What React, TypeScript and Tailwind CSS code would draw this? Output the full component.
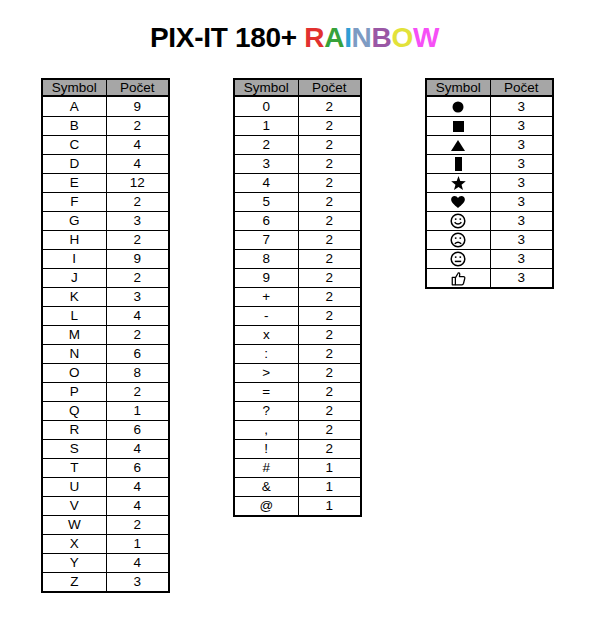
import React from "react";

type Row = [React.ReactNode, number];

const letters: Row[] = [
  ["A", 9], ["B", 2], ["C", 4], ["D", 4], ["E", 12], ["F", 2], ["G", 3],
  ["H", 2], ["I", 9], ["J", 2], ["K", 3], ["L", 4], ["M", 2], ["N", 6],
  ["O", 8], ["P", 2], ["Q", 1], ["R", 6], ["S", 4], ["T", 6], ["U", 4],
  ["V", 4], ["W", 2], ["X", 1], ["Y", 4], ["Z", 3],
];

const digits: Row[] = [
  ["0", 2], ["1", 2], ["2", 2], ["3", 2], ["4", 2], ["5", 2], ["6", 2],
  ["7", 2], ["8", 2], ["9", 2], ["+", 2], ["-", 2], ["x", 2], [":", 2],
  [">", 2], ["=", 2], ["?", 2], [",", 2], ["!", 2], ["#", 1], ["&", 1],
  ["@", 1],
];

const Face = ({ mouth }: { mouth: "smile" | "frown" | "flat" }) => (
  <svg width="16" height="16" viewBox="0 0 16 16" fill="none" stroke="black" strokeWidth="1.5">
    <circle cx="8" cy="8" r="6.8" />
    <circle cx="5.7" cy="6.1" r="0.95" fill="black" stroke="none" />
    <circle cx="10.3" cy="6.1" r="0.95" fill="black" stroke="none" />
    {mouth === "smile" && <path d="M4.6 9.3 Q8 12.8 11.4 9.3" />}
    {mouth === "frown" && <path d="M4.8 11.8 Q8 8.6 11.2 11.8" />}
    {mouth === "flat" && <path d="M4.8 10.4 H11.2" />}
  </svg>
);

const shapes: Row[] = [
  [<svg width="12" height="12" viewBox="0 0 12 12"><circle cx="6" cy="6" r="5.5" /></svg>, 3],
  [<svg width="11" height="11" viewBox="0 0 11 11"><rect width="11" height="11" /></svg>, 3],
  [<svg width="14" height="11" viewBox="0 0 14 11"><path d="M7 0 L14 11 H0 Z" /></svg>, 3],
  [<svg width="7" height="14" viewBox="0 0 7 14"><rect width="7" height="14" /></svg>, 3],
  [
    <svg width="15" height="14" viewBox="0 0 24 23">
      <path d="M12 0 L15 8.2 L24 8.6 L17 14.2 L19.4 23 L12 18 L4.6 23 L7 14.2 L0 8.6 L9 8.2 Z" />
    </svg>,
    3,
  ],
  [
    <svg width="14" height="12" viewBox="0 0 24 21">
      <path d="M12 21 C5 15 0 11 0 6 C0 2.5 2.6 0 6 0 C8.6 0 10.6 1.4 12 3.6 C13.4 1.4 15.4 0 18 0 C21.4 0 24 2.5 24 6 C24 11 19 15 12 21 Z" />
    </svg>,
    3,
  ],
  [<Face mouth="smile" />, 3],
  [<Face mouth="frown" />, 3],
  [<Face mouth="flat" />, 3],
  [
    <svg width="15" height="15" viewBox="0 0 24 24" fill="none" stroke="black" strokeWidth="2" strokeLinejoin="round">
      <rect x="2" y="10" width="5" height="12" />
      <path d="M7 11 L11 4 C11.5 2.5 14 2.5 14 5 L13.5 9 H20 C21.5 9 22.5 10.5 22 12 L20 20 C19.6 21.3 18.8 22 17.5 22 H7" />
    </svg>,
    3,
  ],
];

function Table({ rows }: { rows: Row[] }) {
  return (
    <div className="w-[129px] border-2 border-black">
      <div className="grid h-[17px] grid-cols-2 border-b-2 border-black bg-[#a6a6a6]">
        <div className="flex items-center justify-center">Symbol</div>
        <div className="flex items-center justify-center border-l border-black">Počet</div>
      </div>
      {rows.map(([sym, n], i) => (
        <div
          key={i}
          className={`grid h-[19px] grid-cols-2 ${i > 0 ? "border-t border-black" : ""}`}
        >
          <div className="flex items-center justify-center">{sym}</div>
          <div className="flex items-center justify-center border-l border-black">{n}</div>
        </div>
      ))}
    </div>
  );
}

export default function App() {
  return (
    <div className="h-[623px] w-[595px] bg-white font-['Liberation_Sans',Arial,sans-serif] text-[13.5px] leading-none text-black">
      <h1 className="pt-[24px] pr-[6px] text-center text-[28px] font-bold leading-[28px] tracking-[-0.3px]">
        PIX-IT 180+{" "}
        <span className="text-[#e2312f]">R</span>
        <span className="text-[#37a23a]">A</span>
        <span className="text-[#2f9ed5]">I</span>
        <span className="text-[#7d9bc3]">N</span>
        <span className="text-[#9a57a5]">B</span>
        <span className="text-[#e2e23a]">O</span>
        <span className="text-[#f64ff6]">W</span>
      </h1>
      <div className="mt-[26px] flex items-start gap-[63px] pl-[41px]">
        <Table rows={letters} />
        <Table rows={digits} />
        <Table rows={shapes} />
      </div>
    </div>
  );
}
